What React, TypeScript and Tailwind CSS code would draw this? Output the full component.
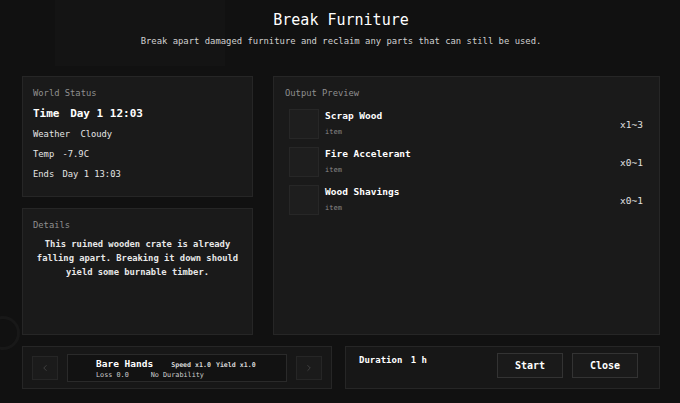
import { ChevronLeft, ChevronRight } from 'lucide-react';

const mono = { fontFamily: '"DejaVu Sans Mono", "Liberation Mono", monospace' };

interface OutputItem {
  name: string;
  kind: string;
  qty: string;
}

const outputs: OutputItem[] = [
  { name: 'Scrap Wood', kind: 'item', qty: 'x1~3' },
  { name: 'Fire Accelerant', kind: 'item', qty: 'x0~1' },
  { name: 'Wood Shavings', kind: 'item', qty: 'x0~1' },
];

function Panel({ className = '', children }: { className?: string; children: React.ReactNode }) {
  return (
    <div className={`bg-[#1a1a1a] border border-[#262626] ${className}`}>{children}</div>
  );
}

export default function App() {
  return (
    <div
      className="relative w-[680px] h-[403px] overflow-hidden bg-[#111111] text-white"
      style={mono}
    >
      {/* dim scene behind the dialog */}
      <div className="absolute left-[55px] top-0 w-[170px] h-[66px] bg-[#141414]"></div>
      <div className="absolute left-[-14px] top-[316px] w-[34px] h-[34px] rounded-full border-[3px] border-[#181818]"></div>

      <div className="relative flex flex-col h-full pl-[22px] pr-[20px]">
        {/* 헤더 */}
        <div className="flex flex-col items-center pt-[10px]">
          <h1 className="text-[15px] leading-[20px] text-white">Break Furniture</h1>
          <p className="mt-[5px] text-[8.9px] leading-[12px] text-[#d0d0d0]">
            Break apart damaged furniture and reclaim any parts that can still be used.
          </p>
        </div>

        {/* 본문 */}
        <div className="flex gap-[20px] mt-[29px] h-[259px]">
          <div className="flex flex-col gap-[11px] w-[231px]">
            <Panel className="h-[121px] px-[10px] pt-[10px]">
              <p className="text-[8.8px] leading-[12px] text-[#8f8f8f]">World Status</p>
              <p className="mt-[8px] text-[11px] leading-[14px] font-bold">
                Time <span className="ml-[4px]">Day 1 12:03</span>
              </p>
              <div className="mt-[7px] flex flex-col gap-[8px] text-[8.8px] leading-[12px] text-[#e5e5e5]">
                <p>
                  Weather <span className="ml-[5px]">Cloudy</span>
                </p>
                <p>
                  Temp <span className="ml-[3px]">-7.9C</span>
                </p>
                <p>
                  Ends <span className="ml-[3px]">Day 1 13:03</span>
                </p>
              </div>
            </Panel>
            <Panel className="flex-1 px-[10px] pt-[10px]">
              <p className="text-[8.8px] leading-[12px] text-[#8f8f8f]">Details</p>
              <p className="mt-[6px] text-center text-[8.8px] leading-[14px] font-bold text-[#e8e8e8]">
                This ruined wooden crate is already
                <br />
                falling apart. Breaking it down should
                <br />
                yield some burnable timber.
              </p>
            </Panel>
          </div>

          <Panel className="flex-1 px-[11px] pt-[10px]">
            <p className="text-[8.8px] leading-[12px] text-[#8f8f8f]">Output Preview</p>
            <div className="mt-[10px] pl-[4px] pr-[5px] flex flex-col gap-[8px]">
              {outputs.map((o) => (
                <div key={o.name} className="flex items-center h-[30px]">
                  <div className="w-[30px] h-[30px] bg-[#1e1e1e] border border-[#272727]"></div>
                  <div className="ml-[6px] flex-1 flex flex-col self-start">
                    <span className="text-[9.5px] leading-[13px] font-bold">{o.name}</span>
                    <span className="mt-[6px] text-[7px] leading-[9px] text-[#8a8a8a]">{o.kind}</span>
                  </div>
                  <span className="text-[9.5px] leading-[13px] text-[#e0e0e0]">{o.qty}</span>
                </div>
              ))}
            </div>
          </Panel>
        </div>

        {/* 하단 바 */}
        <div className="flex gap-[13px] mt-[11px] h-[43px]">
          <Panel className="w-[310px] flex items-center px-[9px] gap-[9px] bg-[#171717]">
            <button className="w-[26px] h-[24px] flex items-center justify-center border border-[#262626] bg-[#1b1b1b] text-[#555]">
              <ChevronLeft className="w-[10px] h-[10px]" strokeWidth={1.5} />
            </button>
            <div className="flex-1 h-[28px] bg-[#121212] border border-[#2a2a2a] pl-[28px] pt-[3px]">
              <div className="flex items-baseline">
                <span className="text-[9.5px] leading-[12px] font-bold">Bare Hands</span>
                <span className="ml-[18px] text-[6.6px] leading-[10px] font-bold text-[#d8d8d8]">Speed x1.0</span>
                <span className="ml-[5px] text-[6.6px] leading-[10px] font-bold text-[#d8d8d8]">Yield x1.0</span>
              </div>
              <div className="flex text-[6.8px] leading-[10px] text-[#cfcfcf]">
                <span>Loss 0.0</span>
                <span className="ml-[22px]">No Durability</span>
              </div>
            </div>
            <button className="w-[26px] h-[24px] flex items-center justify-center border border-[#262626] bg-[#1b1b1b] text-[#555]">
              <ChevronRight className="w-[10px] h-[10px]" strokeWidth={1.5} />
            </button>
          </Panel>
          <Panel className="flex-1 flex items-start justify-between pl-[13px] pr-[21px] pt-[6px] bg-[#171717]">
            <p className="mt-[1px] text-[9px] leading-[12px] font-bold">
              Duration <span className="ml-[3px]">1 h</span>
            </p>
            <div className="flex gap-[9px]">
              <button className="w-[66px] h-[25px] border border-[#333] bg-[#1a1a1a] text-[10px] font-bold">
                Start
              </button>
              <button className="w-[66px] h-[25px] border border-[#333] bg-[#1a1a1a] text-[10px] font-bold">
                Close
              </button>
            </div>
          </Panel>
        </div>
      </div>
    </div>
  );
}
